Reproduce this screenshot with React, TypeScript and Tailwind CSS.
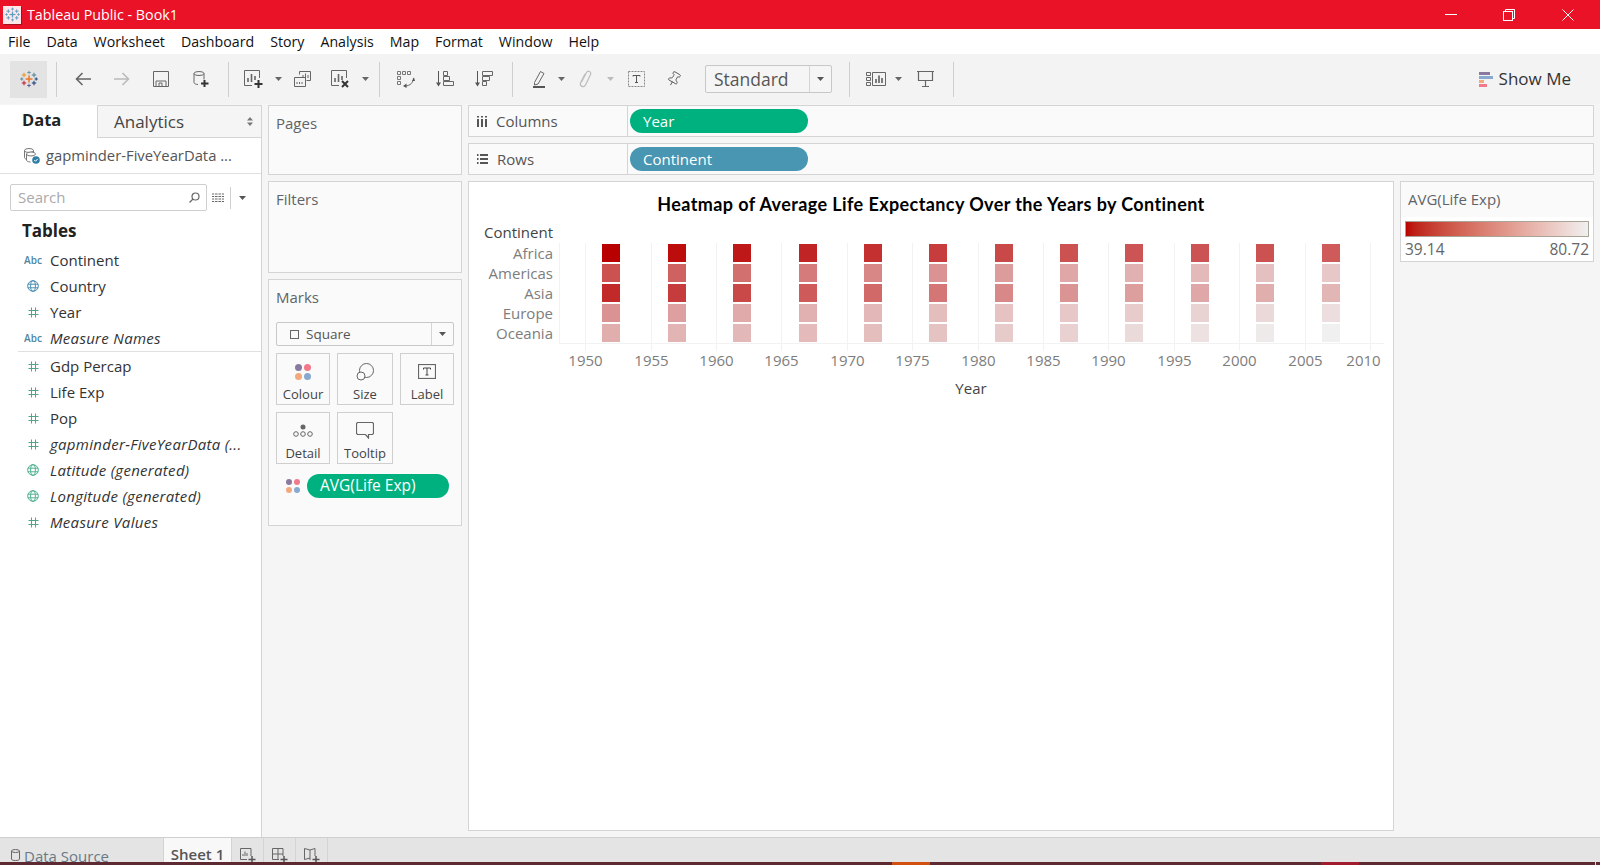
import React from "react";
import { Pin } from "lucide-react";

const squareX = [602, 668, 733, 799, 864, 929, 995, 1060, 1125, 1191, 1256, 1322];
const gridX = [585, 651, 716, 781, 847, 912, 978, 1043, 1108, 1174, 1239, 1305, 1370];
const tickX = [585, 651, 716, 781, 847, 912, 978, 1043, 1108, 1174, 1239, 1305, 1363];
const ticks = ["1950", "1955", "1960", "1965", "1970", "1975", "1980", "1985", "1990", "1995", "2000", "2005", "2010"];
const continents = ["Africa", "Americas", "Asia", "Europe", "Oceania"];
const data = [
  [39.14, 41.27, 43.32, 45.33, 47.45, 49.58, 51.59, 53.34, 53.63, 53.6, 53.33, 54.81],
  [53.28, 55.96, 58.4, 60.41, 62.39, 64.39, 66.23, 68.09, 69.57, 71.15, 72.42, 73.61],
  [46.31, 49.32, 51.56, 54.66, 57.32, 59.61, 62.62, 64.85, 66.54, 68.02, 69.23, 70.73],
  [64.41, 66.7, 68.54, 69.74, 70.78, 71.94, 72.81, 73.64, 74.44, 75.51, 76.7, 77.65],
  [69.26, 70.3, 71.09, 71.31, 71.91, 72.86, 74.29, 75.32, 76.95, 78.19, 79.74, 80.72],
];
const ramp = (v: number) => {
  const t = (v - 39.14) / (80.72 - 39.14);
  const r = Math.round(185 + (240 - 185) * t);
  const g = Math.round(240 * t);
  return `rgb(${r},${g},${g})`;
};

const Cross = ({ x, y, s, c, w = 1.4 }: { x: number; y: number; s: number; c: string; w?: number }) => (
  <g stroke={c} strokeWidth={w}>
    <line x1={x - s} y1={y} x2={x + s} y2={y} />
    <line x1={x} y1={y - s} x2={x} y2={y + s} />
  </g>
);

const TLogo = ({ size, colored }: { size: number; colored: boolean }) => {
  const c = (a: string) => (colored ? a : "#5a9bc4");
  return (
    <svg width={size} height={size} viewBox="0 0 18 18">
      <Cross x={9} y={9} s={3.5} c={c("#e8762b")} w={1.5} />
      <Cross x={9} y={2.5} s={1.8} c={c("#7099a6")} w={1} />
      <Cross x={9} y={15.5} s={1.8} c={c("#5b6591")} w={1} />
      <Cross x={4} y={5} s={2.2} c={c("#e8962b")} w={1.1} />
      <Cross x={14} y={5} s={2.2} c={c("#59879b")} w={1.1} />
      <Cross x={4} y={13} s={2.2} c={c("#c72037")} w={1.1} />
      <Cross x={14} y={13} s={2.2} c={c("#1f447e")} w={1.1} />
      <Cross x={1.8} y={9} s={1.6} c={c("#5b879b")} w={1} />
      <Cross x={16.2} y={9} s={1.6} c={c("#1f447e")} w={1} />
    </svg>
  );
};

const I = ({ w, h, children, className }: { w: number; h: number; children: React.ReactNode; className?: string }) => (
  <svg width={w} height={h} viewBox={`0 0 ${w} ${h}`} fill="none" stroke="#555" strokeWidth={1} className={`shrink-0 ${className ?? ""}`}>
    {children}
  </svg>
);

const Caret = ({ c = "#666" }: { c?: string }) => (
  <svg width={7} height={4} viewBox="0 0 7 4" className="block"><path d="M0 0h7L3.5 4z" fill={c} /></svg>
);

const Sep = ({ className }: { className: string }) => <div className={`w-px h-[35px] bg-[#cfcfcf] shrink-0 ${className}`} />;

const HashI = ({ c = "#4fa584" }: { c?: string }) => (
  <svg width={11} height={11} viewBox="0 0 11 11" stroke={c} strokeWidth={1} fill="none">
    <path d="M3.5 0.5v10M7.5 0.5v10M0.5 3.5h10M0.5 7.5h10" />
  </svg>
);
const GlobeI = ({ c }: { c: string }) => (
  <svg width={12} height={12} viewBox="0 0 12 12" stroke={c} strokeWidth={1} fill="none">
    <circle cx={6} cy={6} r={5.3} />
    <ellipse cx={6} cy={6} rx={2.4} ry={5.3} />
    <path d="M0.8 4.2h10.4M0.8 7.8h10.4" />
  </svg>
);
const Abc = () => <span className="text-[10px] leading-none font-semibold text-[#4d86a3]">Abc</span>;

const Field = ({ icon, label, italic }: { icon: React.ReactNode; label: string; italic?: boolean }) => (
  <div className="flex items-center h-[26px]">
    <div className="w-[50px] pl-[22px] pr-[6px] flex justify-center shrink-0">{icon}</div>
    <span className={`text-[15px] text-[#333] whitespace-nowrap ${italic ? "italic tracking-[0.3px]" : ""}`}>{label}</span>
  </div>
);

const Dots = ({ s = 6, g = 1 }: { s?: number; g?: number }) => (
  <div className="grid grid-cols-2" style={{ gap: g }}>
    {["#8a7aa0", "#f2798a", "#f2a97e", "#88a9d0"].map((c) => (
      <div key={c} className="rounded-full" style={{ width: s, height: s, background: c }} />
    ))}
  </div>
);

const Card = ({ w, icon, label }: { w: string; icon: React.ReactNode; label: string }) => (
  <div className={`${w} h-[52px] border border-[#cfcfcf] bg-[#fafafa] flex flex-col items-center`}>
    <div className="h-[32px] flex items-center justify-center pt-[3px]">{icon}</div>
    <span className="text-[13px] leading-[17px] text-[#444]">{label}</span>
  </div>
);

const Box = ({ title, className }: { title: string; className: string }) => (
  <div className={`border border-[#d4d4d4] bg-[#fafafa] pl-[7px] pt-[5px] ${className}`}>
    <span className="text-[15px] text-[#5f6468]">{title}</span>
  </div>
);

const Shelf = ({ icon, label, pill, color }: { icon: React.ReactNode; label: string; pill: string; color: string }) => (
  <div className="h-[32px] border border-[#d4d4d4] bg-[#fafafa] flex items-stretch">
    <div className="w-[159px] border-r border-[#d4d4d4] flex items-center pl-[8px] gap-[9px]">
      {icon}
      <span className="text-[15px] text-[#555]">{label}</span>
    </div>
    <div className="flex items-center pl-[2px]">
      <div className={`w-[178px] h-[24px] rounded-full ${color} text-white text-[15px] font-medium pl-[13px] flex items-center`}>{pill}</div>
    </div>
  </div>
);

export default function App() {
  return (
    <div className="w-[1600px] h-[865px] overflow-hidden flex flex-col bg-[#f5f5f5] font-['Open_Sans',sans-serif]">
      {/* title bar */}
      <div className="h-[29px] bg-[#e91227] flex items-center shrink-0">
        <div className="ml-[3px] w-[18px] h-[18px] bg-white/90 shadow-[1px_1px_0_#a01020] flex items-center justify-center"><TLogo size={15} colored={false} /></div>
        <span className="ml-[6px] text-[14.3px] text-white">Tableau Public - Book1</span>
        <div className="ml-auto flex items-center">
          <svg width={12} height={2} className="mr-[46px]"><rect width={12} height={1} fill="#fff" /></svg>
          <svg width={12} height={12} viewBox="0 0 12 12" fill="none" stroke="#fff" className="mr-[47px]"><rect x="0.5" y="2.5" width="9" height="9" /><path d="M2.5 2.5V0.5H11.5V9.5H9.5" /></svg>
          <svg width={12} height={12} viewBox="0 0 12 12" stroke="#fff" className="mr-[26px]"><path d="M0.5 0.5l11 11M11.5 0.5l-11 11" /></svg>
        </div>
      </div>
      {/* menu */}
      <div className="h-[25px] bg-white flex items-center pl-[8px] pt-[1px] gap-[16px] text-[14.2px] text-[#111] shrink-0">
        {["File", "Data", "Worksheet", "Dashboard", "Story", "Analysis", "Map", "Format", "Window", "Help"].map((m) => (
          <span key={m}>{m}</span>
        ))}
      </div>
      {/* toolbar */}
      <div className="h-[50px] bg-[#f3f3f3] flex items-center shrink-0">
        <div className="ml-[10px] w-[37px] h-[37px] bg-[#e3e3e3] flex items-center justify-center shrink-0"><TLogo size={18} colored /></div>
        <Sep className="ml-[9px]" />
        <I w={16} h={14} className="ml-[18px]"><path d="M16 7H1.5M7.5 1L1.5 7l6 6" strokeWidth={1.6} stroke="#666" /></I>
        <I w={16} h={14} className="ml-[23px]"><path d="M0 7h14.5M8.5 1l6 6-6 6" strokeWidth={1.6} stroke="#bbb" /></I>
        <I w={16} h={16} className="ml-[23px]"><path d="M0.5 0.5h15v15h-15zM3 15.5V10h10v5.5M6 12h3v3.5H6z" stroke="#666" /></I>
        <I w={16} h={17} className="ml-[24px]">
          <ellipse cx={6} cy={2.5} rx={5} ry={2} stroke="#666" />
          <path d="M1 2.5v9c0 1 2 2 4 2M11 2.5v6" stroke="#666" />
          <path d="M11.5 9v7M8 12.5h7.5" stroke="#333" strokeWidth={2} />
        </I>
        <Sep className="ml-[19px]" />
        <I w={20} h={18} className="ml-[15px]">
          <path d="M15.5 8V0.5H0.5v15H8" stroke="#666" />
          <path d="M4 12V8M7.5 12V4M11 10V6" stroke="#666" strokeWidth={1.6} />
          <path d="M14.5 10v8M10.5 14h8" stroke="#333" strokeWidth={2} />
        </I>
        <div className="ml-[11px]"><Caret /></div>
        <I w={17} h={16} className="ml-[12px]">
          <path d="M5.5 3.5V0.5h11v9h-4M0.5 6.5h11v9h-11z" stroke="#666" />
          <path d="M9 7V4M11.5 7V2.5M14 7V4" stroke="#666" /><path d="M3 13v-2M5.5 13v-2M8 13v-2" stroke="#666" />
        </I>
        <I w={20} h={18} className="ml-[20px]">
          <path d="M15.5 8V0.5H0.5v15H8" stroke="#666" />
          <path d="M4 12V8M7.5 12V4M11 10V6" stroke="#666" strokeWidth={1.6} />
          <path d="M11 11l6 6M17 11l-6 6" stroke="#333" strokeWidth={2} />
        </I>
        <div className="ml-[11px]"><Caret /></div>
        <Sep className="ml-[10px]" />
        <I w={18} h={17} className="ml-[17px]">
          <path d="M0.5 0.5h3v3h-3zM5.5 0.5h3v3h-3zM10.5 0.5h3v3h-3zM0.5 5.5h3v3h-3zM0.5 10.5h3v3h-3z" stroke="#777" />
          <path d="M16.5 7c0 4-3 8-8.500 8" stroke="#666" />
          <path d="M15 10l2-3.500 1 3.500zM9.500 12.500L6 15l3.500 2z" fill="#555" stroke="none" />
        </I>
        <I w={18} h={16} className="ml-[21px]">
          <path d="M2.500 0v13" stroke="#555" />
          <path d="M0 11.500h5L2.500 15.500z" fill="#555" stroke="none" />
          <path d="M7.500 0.500h4v4h-4zM7.500 5.500h6v4h-6zM7.500 10.500h10v4h-10z" stroke="#666" />
        </I>
        <I w={18} h={16} className="ml-[21px]">
          <path d="M2.500 0v13" stroke="#555" />
          <path d="M0 11.500h5L2.500 15.500z" fill="#555" stroke="none" />
          <path d="M7.500 0.500h10v4h-10zM7.500 5.500h7v4h-7zM7.500 10.500h4v4h-4z" stroke="#666" />
        </I>
        <Sep className="ml-[19px]" />
        <I w={13} h={18} className="ml-[20px]">
          <path d="M1.500 12.500L7.500 1.500l3.500 2-6 10.500-3.500 1z" stroke="#666" />
          <rect x={0} y={16} width={12} height={2} fill="#555" stroke="none" />
        </I>
        <div className="ml-[12px]"><Caret /></div>
        <I w={13} h={18} className="ml-[14px]">
          <path d="M2.500 12L7.500 2.500C9 0 12.500 1.500 11.500 4.500L6.500 15C5 18 .5 16.500 1.500 13L6 4" stroke="#bbb" strokeWidth={1.2} />
        </I>
        <div className="ml-[15px]"><Caret c="#bbb" /></div>
        <I w={17} h={16} className="ml-[14px]">
          <rect x="0.5" y="0.5" width="16" height="15" stroke="#888" strokeDasharray="2 1" />
          <path d="M5 4.500h7M8.500 4.500v7M7 11.500h3M5 4.500v1M12 4.500v1" stroke="#555" />
        </I>
        <Pin size={16} strokeWidth={1.3} color="#555" className="ml-[21px] shrink-0 rotate-[30deg]" />
        <div className="ml-[23px] w-[127px] h-[28px] border border-[#c8c8c8] rounded-[2px] bg-[#f5f5f5] flex items-stretch shrink-0">
          <span className="flex-1 pl-[8px] text-[17.5px] leading-[26px] text-[#555]">Standard</span>
          <div className="w-[22px] border-l border-[#d4d4d4] flex items-center justify-center"><Caret c="#555" /></div>
        </div>
        <Sep className="ml-[17px]" />
        <I w={20} h={14} className="ml-[16px]">
          <path d="M0.500 0.500h4v3h-4zM0.500 5.500h4v3h-4zM0.500 10.500h4v3h-4zM6.500 0.500h13v13h-13z" stroke="#666" />
          <path d="M10 11V7M13 11V3.500M16 11V6" stroke="#555" strokeWidth={1.5} />
        </I>
        <div className="ml-[9px]"><Caret /></div>
        <I w={17} h={16} className="ml-[15px]">
          <path d="M0 0.500h17M1.500 0.500v9h14v-9M8.500 9.500v5.500M5 15.500h7" stroke="#666" strokeWidth={1.2} />
        </I>
        <Sep className="ml-[19px]" />
        <div className="ml-auto mr-[29px] flex items-center">
          <div className="flex flex-col gap-[1px] mr-[6px]">
            <div className="w-[11px] h-[3px] bg-[#8a7aa0]" />
            <div className="w-[14px] h-[3px] bg-[#88a9d0]" />
            <div className="w-[5px] h-[3px] bg-[#f2a97e]" />
            <div className="w-[8px] h-[3px] bg-[#f2798a]" />
          </div>
          <span className="text-[17px] text-[#333]">Show Me</span>
        </div>
      </div>
      {/* main */}
      <div className="flex-1 min-h-0 flex pt-[1px]">
        <div className="w-[262px] bg-white border-r border-[#d4d4d4] shrink-0 flex flex-col">
          <div className="h-[33px] flex">
            <div className="w-[97px] pl-[22px] text-[16.5px] font-bold text-[#222] leading-[30px]">Data</div>
            <div className="flex-1 flex items-center bg-[#f5f5f5] border-l border-b border-t border-[#d4d4d4] pl-[16px]">
              <span className="text-[17px] text-[#444]">Analytics</span>
              <svg width={6} height={9} viewBox="0 0 6 9" className="ml-auto mr-[8px]"><path d="M0 3.500L3 0l3 3.500zM0 5.500h6L3 9z" fill="#777" /></svg>
            </div>
          </div>
          <div className="h-[36px] border-b border-[#e0e0e0] flex items-center pl-[24px] gap-[6px]">
            <svg width={16} height={16} viewBox="0 0 16 16" fill="none" stroke="#777">
              <ellipse cx={5} cy={2.500} rx={4.500} ry={2} />
              <path d="M0.500 2.500v7c0 1 1 1.500 2.500 1.800M9.500 2.500v2" />
              <ellipse cx={7} cy={6} rx={4.500} ry={2} fill="#fff" />
              <path d="M2.500 6v6c0 1 1.500 2 4 2" />
              <circle cx={12} cy={12} r={3.800} fill="#2f7ea6" stroke="none" />
              <path d="M10.300 12l1.200 1.300 2.200-2.400" stroke="#fff" strokeWidth={1} />
            </svg>
            <span className="text-[14.8px] text-[#555] whitespace-nowrap">gapminder-FiveYearData ...</span>
          </div>
          <div className="h-[27px] mt-[10px] flex items-center">
            <div className="ml-[10px] w-[197px] h-full border border-[#cfcfcf] rounded-[2px] flex items-center pl-[7px] pr-[6px] justify-between">
              <span className="text-[15px] text-[#aaa]">Search</span>
              <svg width={11} height={11} viewBox="0 0 11 11" fill="none" stroke="#666" strokeWidth={1.200}><circle cx={6.500} cy={4.500} r={3.500} /><path d="M4 7l-3.500 3.500" /></svg>
            </div>
            <svg width={12} height={10} viewBox="0 0 12 10" className="ml-[5px]" stroke="#666" strokeWidth={1}>
              <path d="M0 1h12M0 3.500h12M0 6h12M0 8.500h12" /><path d="M2.500 0v10M6 0v10M9.500 0v10" stroke="#f3f3f3" />
            </svg>
            <div className="w-px h-[22px] bg-[#d0d0d0] ml-[6px]" />
            <div className="ml-[8px]"><Caret c="#555" /></div>
          </div>
          <div className="h-[24px] mt-[8px] pl-[22px] text-[17px] font-bold text-[#222] leading-[24px]">Tables</div>
          <div className="mt-[4px] border-b border-[#e0e0e0] ml-[18px]">
            <div className="-ml-[18px]">
              <Field icon={<Abc />} label="Continent" />
              <Field icon={<GlobeI c="#4a8fb3" />} label="Country" />
              <Field icon={<HashI />} label="Year" />
              <Field icon={<Abc />} label="Measure Names" italic />
            </div>
          </div>
          <div className="mt-[1px]">
            <Field icon={<HashI />} label="Gdp Percap" />
            <Field icon={<HashI />} label="Life Exp" />
            <Field icon={<HashI />} label="Pop" />
            <Field icon={<HashI />} label="gapminder-FiveYearData (..." italic />
            <Field icon={<GlobeI c="#4fb38e" />} label="Latitude (generated)" italic />
            <Field icon={<GlobeI c="#4fb38e" />} label="Longitude (generated)" italic />
            <Field icon={<HashI />} label="Measure Values" italic />
          </div>
        </div>
        <div className="w-[206px] shrink-0 pl-[6px] pr-[6px] flex flex-col gap-[6px]">
          <Box title="Pages" className="h-[70px]" />
          <Box title="Filters" className="h-[92px]" />
          <div className="h-[247px] border border-[#d4d4d4] bg-[#fafafa] px-[7px] pt-[5px]">
            <span className="text-[15px] text-[#5f6468]">Marks</span>
            <div className="mt-[13px] h-[24px] border border-[#c8c8c8] rounded-[2px] flex items-stretch">
              <div className="flex-1 flex items-center pl-[13px] gap-[7px]">
                <div className="w-[9px] h-[9px] border border-[#666]" />
                <span className="text-[13.5px] text-[#555]">Square</span>
              </div>
              <div className="w-[22px] border-l border-[#d4d4d4] flex items-center justify-center"><Caret c="#555" /></div>
            </div>
            <div className="mt-[7px] flex flex-wrap gap-x-[7px] gap-y-[7px]">
              <Card w="w-[54px]" icon={<Dots s={7} g={2} />} label="Colour" />
              <Card w="w-[56px]" label="Size" icon={
                <svg width={19} height={18} viewBox="0 0 19 18" fill="none" stroke="#666"><circle cx={10.500} cy={7.500} r={7} /><circle cx={5} cy={13} r={4} fill="#fafafa" /></svg>
              } />
              <Card w="w-[54px]" label="Label" icon={
                <svg width={18} height={15} viewBox="0 0 18 15" fill="none" stroke="#666"><rect x="0.500" y="0.500" width="17" height="14" strokeWidth={1.200} /><path d="M5.500 4h7M9 4v7M7.500 11h3M5.500 4v1.500M12.500 4v1.500" stroke="#444" /></svg>
              } />
              <Card w="w-[54px]" label="Detail" icon={
                <svg width={20} height={13} viewBox="0 0 20 13" fill="none" stroke="#666"><circle cx={10} cy={3} r={2.500} fill="#666" stroke="none" /><circle cx={3} cy={10} r={2.300} /><circle cx={10} cy={10} r={2.300} /><circle cx={17} cy={10} r={2.300} /></svg>
              } />
              <Card w="w-[56px]" label="Tooltip" icon={
                <svg width={18} height={17} viewBox="0 0 18 17" fill="none" stroke="#666"><path d="M1.500 0.500h15l1 1v10l-1 1h-4v3.500l-3-3.500h-8l-1-1v-10z" strokeWidth={1.200} /></svg>
              } />
            </div>
            <div className="mt-[10px] flex items-center pl-[10px]">
              <Dots s={6} g={2} />
              <div className="ml-[7px] w-[142px] h-[24px] rounded-full bg-[#00b180] text-white text-[15.5px] font-medium flex items-center pl-[13px] whitespace-nowrap">AVG(Life Exp)</div>
            </div>
          </div>
        </div>
        <div className="w-[1126px] shrink-0 flex flex-col gap-[6px]">
          <Shelf label="Columns" pill="Year" color="bg-[#00b180]" icon={
            <svg width={10} height={11} viewBox="0 0 10 11" stroke="#555" strokeWidth={2}><path d="M1 0v1.500M5 0v1.500M9 0v1.500M1 3v8M5 3v8M9 3v8" /></svg>
          } />
          <Shelf label="Rows" pill="Continent" color="bg-[#4996b2]" icon={
            <svg width={11} height={10} viewBox="0 0 11 10" stroke="#555" strokeWidth={2}><path d="M0 1h1.500M3 1h8M0 5h1.500M3 5h8M0 9h1.500M3 9h8" /></svg>
          } />
          <div className="flex gap-[6px] items-start">
            <div className="w-[926px] h-[650px] bg-white border border-[#d4d4d4]">
              <div className="h-[42px] pt-[9px] flex justify-center">
                <span className="text-[18px] leading-[26px] font-bold text-black font-['Lato',sans-serif] tracking-[0.4px] whitespace-nowrap">Heatmap of Average Life Expectancy Over the Years by Continent</span>
              </div>
              <div className="flex">
                <div className="w-[84px] text-right shrink-0 -mt-[1px]">
                  <div className="h-[20px] text-[15px] leading-[19px] text-[#444]">Continent</div>
                  {continents.map((c) => (
                    <div key={c} className="h-[20px] text-[15px] leading-[20px] text-[#7d7d7d]">{c}</div>
                  ))}
                </div>
                <svg width={830} height={190} className="ml-[5px] mt-[19px] shrink-0">
                  {gridX.map((x) => (
                    <line key={x} x1={x - 558 + 0.5} y1={0} x2={x - 558 + 0.5} y2={108} stroke="#f2f2f2" />
                  ))}
                  <line x1={1.500} y1={0} x2={1.500} y2={100} stroke="#f2f2f2" />
                  <line x1={1} y1={100.500} x2={826} y2={100.500} stroke="#f2f2f2" />
                  {data.map((row, r) =>
                    row.map((v, i) => (
                      <rect key={`${r}-${i}`} x={squareX[i] - 558} y={1 + r * 20} width={18} height={18} fill={ramp(v)} />
                    ))
                  )}
                  {tickX.map((x, i) => (
                    <text key={x} x={x - 558 + 0.5} y={123} textAnchor="middle" fontSize={15} fill="#7d7d7d">{ticks[i]}</text>
                  ))}
                  <text x={413} y={151} textAnchor="middle" fontSize={15} fill="#444">Year</text>
                </svg>
              </div>
            </div>
            <div className="w-[194px] h-[81px] border border-[#d4d4d4] bg-white flex flex-col">
              <div className="h-[35px] bg-[#fafafa] pl-[7px] pt-[6px] text-[15px] text-[#5f6468]">AVG(Life Exp)</div>
              <div className="mx-[4px] mt-[4px] h-[16px] border border-[#a8a498] bg-gradient-to-r from-[#b90000] to-[#f0f0f0]" />
              <div className="mx-[4px] mt-[2px] flex justify-between text-[15.5px] leading-[20px] text-[#666]">
                <span>39.14</span>
                <span>80.72</span>
              </div>
            </div>
          </div>
        </div>
      </div>
      {/* tabs */}
      <div className="h-[25px] bg-[#e4e4e4] border-t border-[#cfcfcf] flex shrink-0 overflow-hidden">
        <div className="w-[163px] pl-[11px] flex items-start pt-[9px] gap-[4px]">
          <svg width={9} height={12} viewBox="0 0 9 12" fill="none" stroke="#666" className="mt-[2px]"><ellipse cx={4.500} cy={2} rx={4} ry={1.500} /><path d="M0.500 2v8c0 1 1.500 1.500 4 1.500s4-.5 4-1.500V2" /></svg>
          <span className="text-[15px] leading-[18px] text-[#6a7a85] whitespace-nowrap">Data Source</span>
        </div>
        <div className="w-[69px] bg-[#f8f8f8] border-x border-[#d4d4d4] text-[15px] font-semibold text-[#555] text-center pt-[7px] leading-[18px] whitespace-nowrap">Sheet 1</div>
        {[
          <path key="a" d="M11 8V0.500H0.500v11H7M3 8V6M5 8V3.500M7 8V5" />,
          <path key="b" d="M11 8V0.500H0.500v11H7M0.500 6h10.500M6 0.500v11" />,
          <path key="c" d="M11 8V0.500L6 2 0.500 0.500v11L6 10v2M6 2v8" />,
        ].map((p, i) => (
          <div key={i} className="w-[32px] border-r border-[#d4d4d4] flex justify-center pt-[10px]">
            <svg width={16} height={16} viewBox="0 0 16 16" fill="none" stroke="#666">
              {p}
              <path d="M12 8v7M8.500 11.500h7" stroke="#555" strokeWidth={1.500} />
            </svg>
          </div>
        ))}
      </div>
      <div className="h-[3px] bg-[#5c2a30] flex shrink-0">
        <div className="ml-[892px] w-[38px] bg-[#d2500f]" />
        <div className="ml-[391px] w-[38px] bg-[#a01c2c]" />
        <div className="ml-auto mr-[4px] w-px bg-[#ddd]" />
      </div>
    </div>
  );
}
